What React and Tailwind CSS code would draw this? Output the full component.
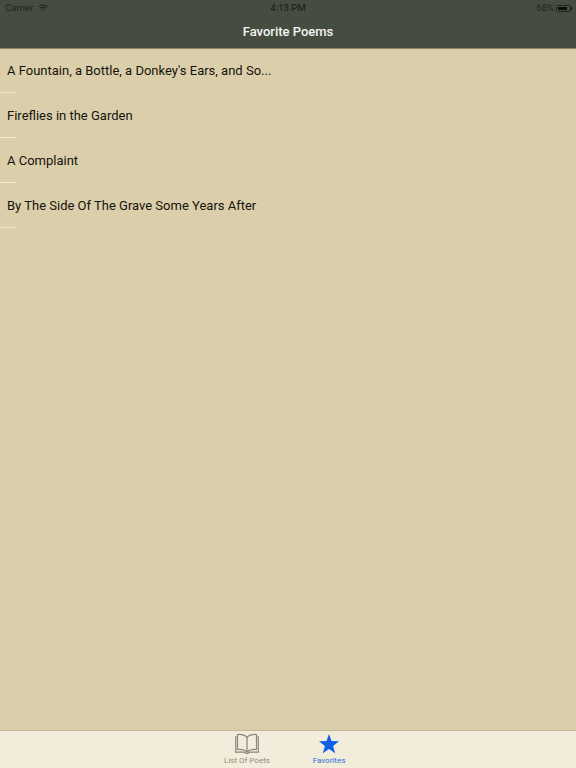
import React from 'react';

const poems = [
  "A Fountain, a Bottle, a Donkey's Ears, and So...",
  'Fireflies in the Garden',
  'A Complaint',
  'By The Side Of The Grave Some Years After',
];

// separators under the empty rows are barely visible, only a few show
const emptyRows = [
  'border-transparent',
  'border-transparent',
  'border-[#d6cba8]',
  'border-[#d6cba8]',
  'border-transparent',
  'border-[#d8ccae]',
  'border-[#d7cca9]',
];

const PoemRow = ({ title }) => (
  <div className="h-[45px] relative flex items-center pl-[7px] pt-[1px] border-b border-[#dcd2b0]">
    <span className="text-[13px] text-[#15130c] whitespace-nowrap">{title}</span>
    <div className="absolute left-0 -bottom-px w-4 h-px bg-[#f0e9d2]" />
  </div>
);

const BookIcon = () => (
  <svg width="24" height="22" viewBox="0 0 24 22" fill="none" stroke="#8a877c" strokeWidth="1.2">
    <path d="M12 4.5C10 2.2 6.5 1.2 2.5 1.5V16.5C6.5 16.2 10 17 12 19C14 17 17.5 16.2 21.5 16.5V1.5C17.5 1.2 14 2.2 12 4.5Z" />
    <path d="M12 4.5V19" />
    <path d="M2.5 4H0.7V19.2H9C10 19.2 10.5 20.5 12 20.5C13.5 20.5 14 19.2 15 19.2H23.3V4H21.5" />
  </svg>
);

const App = () => {
  return (
    <div className="w-[576px] h-[768px] flex flex-col overflow-hidden bg-[#dbcfab] font-['Roboto','Liberation_Sans',sans-serif]">
      {/* Nav bar */}
      <div className="h-[49px] shrink-0 relative z-10 flex flex-col bg-[#454d40] border-b border-[#8b8568]">
        <div className="h-4 relative flex items-center justify-between pl-[5px] pr-[4px] text-[9.5px] text-[#20251c]">
          <div className="flex items-center gap-[5px]">
            <span>Carrier</span>
            <svg width="10" height="8" viewBox="0 0 10 8" fill="none" stroke="#20251c" strokeWidth="1.1">
              <path d="M0.6 2.8C3 0.4 7 0.4 9.4 2.8" />
              <path d="M2.2 4.4C3.7 3 6.3 3 7.8 4.4" />
              <path d="M3.8 6C4.5 5.4 5.5 5.4 6.2 6" />
            </svg>
          </div>
          <span className="absolute left-0 right-0 text-center font-medium">4:13 PM</span>
          <div className="flex items-center gap-[2px]">
            <span>68%</span>
            <div className="w-[15px] h-[7px] border border-[#20251c] rounded-[1.5px] p-px">
              <div className="w-[9px] h-full bg-[#0c0c0c]" />
            </div>
            <div className="w-px h-[3px] -ml-[2px] bg-[#20251c]" />
          </div>
        </div>
        <div className="flex-1 flex items-center justify-center">
          <span className="text-[13px] font-medium text-[#f4f4f0]">Favorite Poems</span>
        </div>
      </div>

      {/* Poems */}
      <div className="flex-1 -mt-px flex flex-col">
        {poems.map((title) => (
          <PoemRow key={title} title={title} />
        ))}
        {emptyRows.map((border, i) => (
          <div key={i} className="h-[45px] pl-4">
            <div className={`h-full border-b ${border}`} />
          </div>
        ))}
      </div>

      {/* Tab bar */}
      <div className="h-[38px] shrink-0 flex justify-center gap-[32px] bg-[#f2ecdb] border-t border-[#c4bb9d]">
        <div className="w-[50px] flex flex-col items-center pt-[2px]">
          <BookIcon />
          <span className="mt-[1px] text-[8px] leading-[9px] text-[#8f8c82]">List Of Poets</span>
        </div>
        <div className="w-[50px] flex flex-col items-center pt-[2px]">
          <svg width="22" height="22" viewBox="0 0 22 22" fill="#0f5fe8">
            <path d="M11 1 13.5 8 21 8.3 15.1 12.9 17.2 20.2 11 16 4.8 20.2 6.9 12.9 1 8.3 8.5 8Z" />
          </svg>
          <span className="mt-[1px] text-[8px] leading-[9px] text-[#2f6fe0]">Favorites</span>
        </div>
      </div>
    </div>
  );
};

export default App;
